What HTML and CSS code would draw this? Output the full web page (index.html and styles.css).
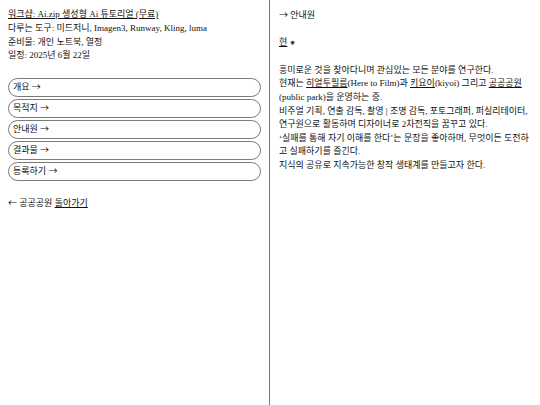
FILE: index.html
```html
<!DOCTYPE html>
<html lang="ko">
<head>
  <meta charset="UTF-8">
  <title>워크샵: Ai.zip</title>
  <link rel="stylesheet" href="styles.css">
</head>
<body>
  <div class="page">
    <!-- 왼쪽: 워크샵 정보 -->
    <aside class="side">
      <div class="info">
        <div><a href="#">워크샵: Ai.zip 생성형 Ai 튜토리얼 (무료)</a></div>
        <div>다루는 도구: 미드저니, Imagen3, Runway, Kling, luma</div>
        <div>준비물: 개인 노트북, 열정</div>
        <div>일정: 2025년 6월 22일</div>
      </div>

      <nav class="menu">
        <button class="pill">개요 <span class="arr">→</span></button>
        <button class="pill">목적지 <span class="arr">→</span></button>
        <button class="pill">안내원 <span class="arr">→</span></button>
        <button class="pill">결과물 <span class="arr">→</span></button>
        <button class="pill">등록하기 <span class="arr">→</span></button>
      </nav>

      <div class="back"><span class="arr">←</span> 공공공원 <a href="#">돌아가기</a></div>
    </aside>

    <!-- 오른쪽: 안내원 소개 -->
    <main class="content">
      <div class="crumb"><span class="arr">→</span> 안내원</div>
      <div class="name"><a href="#">현</a> ⁕</div>
      <p class="bio">
        흥미로운 것을 찾아다니며 관심있는 모든 분야를 연구한다.<br>
        현재는 <a href="#">히얼투필름</a>(Here to Film)과 <a href="#">키요이</a>(kiyoi) 그리고 <a href="#">공공공원</a> (public park)을 운영하는 중.<br>
        비주얼 기획, 연출 감독, 촬영 | 조명 감독, 포토그래퍼, 퍼실리테이터, 연구원으로 활동하며 디자이너로 2차전직을 꿈꾸고 있다.<br>
        ‘실패를 통해 자기 이해를 한다’는 문장을 좋아하며, 무엇이든 도전하고 실패하기를 즐긴다.<br>
        지식의 공유로 지속가능한 창작 생태계를 만들고자 한다.
      </p>
    </main>
  </div>
</body>
</html>
```

FILE: styles.css
```css
:root {
  --text-color: #111;
  --line-color: #7a7a7a;
  --font-family: "Liberation Serif", "Noto Sans CJK KR", serif;
}
* {
  box-sizing: border-box;
}
html, body {
  margin: 0;
  height: 100%;
}
body {
  font-family: var(--font-family);
  font-size: 9px;
  line-height: 13.8px;
  color: var(--text-color);
  background: #fff;
}
a {
  color: inherit;
  text-decoration: underline;
}
.arr {
  font-family: "Noto Sans CJK KR", sans-serif;
}
.page {
  display: grid;
  grid-template-columns: 270px 1fr;
  height: 100%;
}
/* 왼쪽 */
.side {
  border-right: 1px solid var(--line-color);
  padding: 8px;
}
.menu {
  display: flex;
  flex-direction: column;
  gap: 2px;
  margin-top: 15px;
}
.pill {
  font: inherit;
  color: inherit;
  text-align: left;
  background: #fff;
  border: 1px solid var(--line-color);
  border-radius: 10px;
  height: 19px;
  padding: 0 4px;
  cursor: pointer;
}
.back {
  margin-top: 15px;
}
/* 오른쪽 */
.content {
  padding: 8px 9px;
}
.name {
  margin-top: 13.6px;
}
.bio {
  margin: 13.6px 0 0;
  line-height: 13.6px;
}
```
